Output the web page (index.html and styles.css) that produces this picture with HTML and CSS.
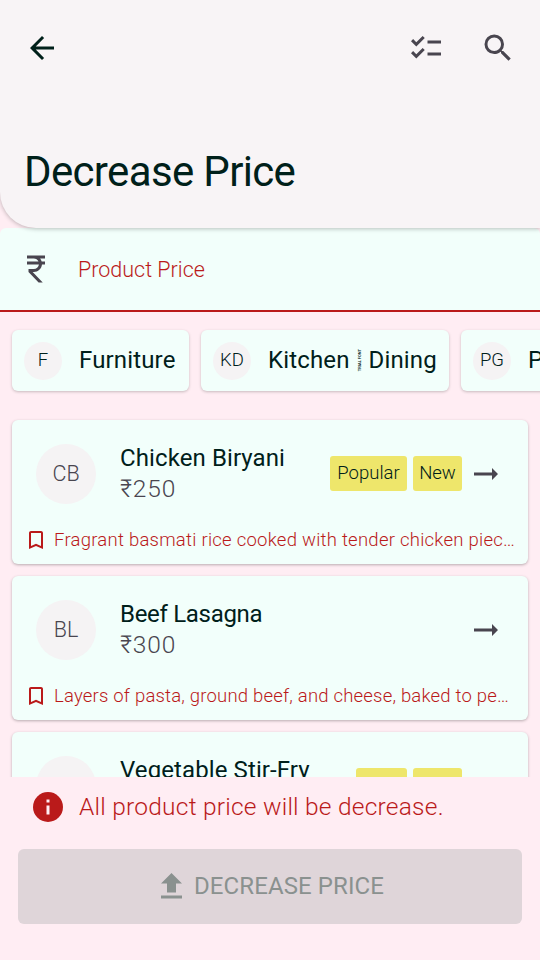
FILE: index.html
```
<!DOCTYPE html>
<html lang="en">
<head>
<meta charset="utf-8">
<title>Decrease Price</title>
<link rel="stylesheet" href="styles.css">
</head>
<body>
<main class="screen">
  <header class="header">
    <div class="toolbar">
      <svg class="icon" viewBox="0 0 24 24" width="36" height="36"><path class="ink" d="M20 11H7.83l5.59-5.59L12 4l-8 8 8 8 1.41-1.41L7.83 13H20z"/></svg>
      <div class="actions">
        <svg class="icon" viewBox="0 0 24 24" width="36" height="36"><path d="M22 7h-9v2h9V7zm0 8h-9v2h9v-2zM5.54 11 2 7.46l1.41-1.41 2.12 2.12 4.24-4.24 1.41 1.41L5.54 11zm0 8L2 15.46l1.41-1.41 2.12 2.12 4.24-4.24 1.41 1.41L5.54 19z"/></svg>
        <svg class="icon" viewBox="0 0 24 24" width="36" height="36"><path d="M15.5 14h-.79l-.28-.27A6.47 6.47 0 0 0 16 9.5 6.5 6.5 0 1 0 9.5 16c1.61 0 3.09-.59 4.23-1.57l.27.28v.79l5 4.99L20.49 19l-4.99-5zm-6 0C7.01 14 5 11.99 5 9.5S7.01 5 9.5 5 14 7.01 14 9.5 11.99 14 9.5 14z"/></svg>
      </div>
    </div>
    <h1 class="title">Decrease Price</h1>
  </header>

  <section class="field">
    <svg class="icon" viewBox="0 0 24 24" width="36" height="36"><path d="M13.66 7c-.56-1.18-1.76-2-3.16-2H6V3h12v2h-3.26c.48.58.84 1.26 1.05 2H18v2h-2.02c-.25 2.8-2.61 5-5.48 5h-.73l6.73 7h-2.77L7 14v-2h3.5c1.76 0 3.22-1.3 3.46-3H6V7h7.66z"/></svg>
    <span class="label">Product Price</span>
  </section>

  <section class="chips">
    <div class="chip chip-furniture"><span class="mini">F</span><span class="chip-name">Furniture</span></div>
    <div class="chip chip-kitchen"><span class="mini">KD</span><span class="chip-name">Kitchen</span><span class="mark">TRIAL FONT</span><span class="chip-name">Dining</span></div>
    <div class="chip chip-next"><span class="mini">PG</span><span class="chip-name">P</span></div>
  </section>

  <section class="list">
    <article class="card">
      <div class="row">
        <span class="avatar">CB</span>
        <div class="info"><div class="name">Chicken Biryani</div><div class="price">₹250</div></div>
        <div class="tags"><span class="tag popular">Popular</span><span class="tag new">New</span></div>
        <svg class="arrow" viewBox="0 0 24 12" width="24" height="12"><path d="M0 4.5h18V0l6 6-6 6V7.5H0z"/></svg>
      </div>
      <div class="note">
        <svg class="bookmark" viewBox="0 0 14 18" width="14" height="18"><path d="M12 0H2C.9 0 0 .9 0 2v16l7-3 7 3V2c0-1.1-.9-2-2-2zm0 15-5-2.18L2 15V2h10z"/></svg>
        <span class="desc">Fragrant basmati rice cooked with tender chicken piec…</span>
      </div>
    </article>
    <article class="card">
      <div class="row">
        <span class="avatar">BL</span>
        <div class="info"><div class="name lasagna">Beef Lasagna</div><div class="price">₹300</div></div>
        <svg class="arrow" viewBox="0 0 24 12" width="24" height="12"><path d="M0 4.5h18V0l6 6-6 6V7.5H0z"/></svg>
      </div>
      <div class="note">
        <svg class="bookmark" viewBox="0 0 14 18" width="14" height="18"><path d="M12 0H2C.9 0 0 .9 0 2v16l7-3 7 3V2c0-1.1-.9-2-2-2zm0 15-5-2.18L2 15V2h10z"/></svg>
        <span class="desc layers">Layers of pasta, ground beef, and cheese, baked to pe…</span>
      </div>
    </article>
    <article class="card">
      <div class="row">
        <span class="avatar"></span>
        <div class="info"><div class="name">Vegetable Stir-Fry</div></div>
        <div class="tags"><span class="tag short"></span><span class="tag new"></span></div>
        <span class="arrow-space"></span>
      </div>
    </article>
  </section>

  <footer class="footer">
    <div class="notice">
      <svg viewBox="0 0 30 30" width="30" height="30"><circle cx="15" cy="15" r="15" fill="#ba1a1a"/><path d="M13.5 13.5h3v9h-3zM13.5 7.5h3v3h-3z" fill="#ffedf3"/></svg>
      <span class="notice-text">All product price will be decrease.</span>
    </div>
    <button class="submit" disabled>
      <svg viewBox="0 0 21 26" width="21" height="26"><path d="M6 19.5h9v-9h6L10.5 0 0 10.5h6zM0 22.5h21v3H0z"/></svg>
      <span class="submit-text">DECREASE PRICE</span>
    </button>
  </footer>
</main>
</body>
</html>
```
FILE: styles.css
```
* { box-sizing: border-box; }
body {
  margin: 0;
  font-family: Roboto, "Liberation Sans", sans-serif;
  font-weight: 400;
  color: #00201a;
}
svg { display: block; flex: none; fill: #49454f; }
.ink { fill: #00201a; }
.screen {
  width: 540px;
  height: 960px;
  overflow: hidden;
  display: flex;
  flex-direction: column;
  background: #ffedf3;
}
.header {
  position: relative;
  z-index: 1;
  flex: none;
  height: 228px;
  background: #f8f4f6;
  border-radius: 0 0 0 36px;
  box-shadow: 0 1px 4px rgba(0, 0, 0, .25);
}
.toolbar {
  height: 96px;
  padding: 0 24px;
  display: flex;
  align-items: center;
  justify-content: space-between;
}
.actions { display: flex; gap: 36px; }
.title {
  margin: 48px 0 0 24px;
  font-size: 42px;
  line-height: 56px;
  font-weight: 400;
  letter-spacing: -.65px;
}
.field {
  flex: none;
  height: 84px;
  padding: 0 18px;
  display: flex;
  align-items: center;
  background: #f2fffb;
  border-bottom: 2px solid #ba1a1a;
  border-radius: 6px 6px 0 0;
}
.label {
  margin-left: 24px;
  font-size: 21.5px;
  font-weight: 300;
  color: #ba1a1a;
}
.chips {
  flex: none;
  display: flex;
  gap: 12px;
  margin: 18px 0 0 12px;
}
.chip {
  flex: none;
  height: 61px;
  padding-left: 12px;
  display: flex;
  align-items: center;
  background: #f2fffb;
  border-radius: 6px;
  box-shadow: 0 1px 3px rgba(0, 0, 0, .22);
}
.chip-furniture { width: 177px; }
.chip-kitchen { width: 248px; }
.chip-next { width: 160px; }
.mini {
  flex: none;
  width: 38px;
  height: 38px;
  margin-right: 17px;
  border-radius: 50%;
  background: #f5f3f4;
  font-size: 18.5px;
  font-weight: 300;
  line-height: 37px;
  text-align: center;
}
.chip-name {
  font-size: 24px;
  line-height: 30px;
  font-weight: 450;
  letter-spacing: .15px;
  margin-bottom: 2px;
}
.mark {
  width: 5px;
  margin: 0 7px 0 7px;
  writing-mode: vertical-rl;
  transform: rotate(180deg);
  font-size: 4px;
  font-weight: 700;
  line-height: 5px;
  white-space: nowrap;
}
.list {
  flex: none;
  height: 369px;
  margin-top: 17px;
  padding: 12px 12px 0;
  display: flex;
  flex-direction: column;
  gap: 12px;
  overflow: hidden;
}
.card {
  flex: none;
  height: 144px;
  background: #f2fffb;
  border-radius: 6px;
  box-shadow: 0 1px 3px rgba(0, 0, 0, .28);
}
.row {
  height: 108px;
  padding: 0 30px 0 24px;
  display: flex;
  align-items: center;
}
.avatar {
  flex: none;
  width: 60px;
  height: 60px;
  margin-right: 24px;
  border-radius: 50%;
  background: #f5f3f4;
  color: #49454f;
  font-size: 21.5px;
  font-weight: 300;
  line-height: 60px;
  text-align: center;
}
.info { flex: 1; height: 62px; white-space: nowrap; }
.name { font-size: 24px; line-height: 31px; font-weight: 450; letter-spacing: .1px; }
.lasagna { letter-spacing: -.3px; }
.price {
  font-size: 24.5px;
  line-height: 30px;
  font-weight: 300;
  letter-spacing: .9px;
  color: #49454f;
}
.tags { display: flex; gap: 6px; margin: 0 12px 2px 0; }
.tag {
  height: 35px;
  border-radius: 3px;
  background: #eee66b;
  font-size: 18.5px;
  font-weight: 300;
  line-height: 34px;
  text-align: center;
}
.popular { width: 77px; }
.new { width: 49px; }
.short { width: 51px; }
.arrow-space { width: 24px; }
.note {
  height: 24px;
  padding-left: 17px;
  display: flex;
  align-items: center;
}
.bookmark { fill: #ba1a1a; }
.desc {
  margin-left: 11px;
  font-size: 18.5px;
  font-weight: 300;
  letter-spacing: .25px;
  white-space: nowrap;
  color: #ba1a1a;
}
.layers { letter-spacing: .2px; }
.footer { flex: none; padding: 15px 18px 0; }
.notice { display: flex; align-items: center; height: 30px; padding-left: 15px; }
.notice-text {
  margin: 0 0 2px 16px;
  font-size: 24.5px;
  font-weight: 300;
  letter-spacing: .23px;
  color: #ba1a1a;
}
.submit {
  width: 504px;
  height: 75px;
  margin-top: 27px;
  padding: 0 0 0 5px;
  border: 0;
  border-radius: 6px;
  background: #dfd5d9;
  color: #8a918f;
  font: inherit;
  font-size: 24px;
  letter-spacing: .1px;
  display: flex;
  align-items: center;
  justify-content: center;
  gap: 12px;
}
.submit svg { fill: #8a918f; margin-bottom: 1px; }
.submit-text { margin-bottom: 2px; }
```
